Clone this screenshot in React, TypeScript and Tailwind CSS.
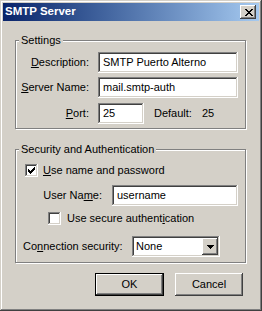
import type { ReactNode } from "react";

const raised =
  "shadow-[inset_-1px_-1px_#404040,inset_1px_1px_#ffffff,inset_-2px_-2px_#808080,inset_2px_2px_#d4d0c8]";
const sunken =
  "shadow-[inset_-1px_-1px_#ffffff,inset_1px_1px_#808080,inset_-2px_-2px_#d4d0c8,inset_2px_2px_#404040]";

// tiny pixel glyphs, drawn the way the classic theme does them
function Pix({ rows, className }: { rows: string[]; className?: string }) {
  const w = rows[0].length;
  const h = rows.length;
  return (
    <svg
      width={w}
      height={h}
      viewBox={`0 0 ${w} ${h}`}
      shapeRendering="crispEdges"
      className={className}
      aria-hidden="true"
    >
      {rows.flatMap((r, y) =>
        r.split("").map((c, x) =>
          c === "X" ? <rect key={`${x}-${y}`} x={x} y={y} width={1} height={1} fill="#000" /> : null
        )
      )}
    </svg>
  );
}

const closeGlyph = ["XX....XX", ".XX..XX.", "..XXXX..", "...XX...", "..XXXX..", ".XX..XX.", "XX....XX"];
const checkGlyph = ["......X", ".....XX", "X...XXX", "XX.XXX.", "XXXXX..", ".XXX...", "..X...."];
const arrowGlyph = ["XXXXXXX", ".XXXXX.", "..XXX..", "...X..."];

function Field({ value, className }: { value: string; className: string }) {
  return (
    <div className={`h-[21px] bg-white ${sunken} flex items-center pl-[5px] text-[11px] ${className}`}>
      {value}
    </div>
  );
}

function Check({ checked }: { checked?: boolean }) {
  return (
    <div className={`w-[13px] h-[13px] bg-white ${sunken} flex items-center justify-center shrink-0`}>
      {checked && <Pix rows={checkGlyph} />}
    </div>
  );
}

function Group({ title, children, className }: { title: string; children: ReactNode; className?: string }) {
  return (
    <fieldset
      className={`ml-[12px] w-[231px] border border-[#808080] shadow-[inset_1px_1px_#ffffff,1px_1px_#ffffff] ${className ?? ""}`}
    >
      <legend className="ml-[3px] px-[2px] bg-[#d4d0c8] leading-[14px]">{title}</legend>
      {children}
    </fieldset>
  );
}

function Btn({ label, isDefault, className }: { label: string; isDefault?: boolean; className: string }) {
  return (
    <button
      type="button"
      className={`h-[23px] bg-[#d4d0c8] ${
        isDefault
          ? "border border-black shadow-[inset_-1px_-1px_#404040,inset_1px_1px_#ffffff,inset_-2px_-2px_#808080]"
          : raised
      } text-[11px] ${className}`}
    >
      {label}
    </button>
  );
}

export default function App() {
  return (
    <div className="w-[262px] h-[311px] bg-[#d4d0c8] p-[3px] flex flex-col text-[11px] text-black font-['Liberation_Sans',Arial,sans-serif] shadow-[inset_-1px_-1px_#404040,inset_1px_1px_#d4d0c8,inset_-2px_-2px_#808080,inset_2px_2px_#ffffff]">
      <div className="h-[18px] flex items-center justify-between bg-gradient-to-r from-[#0a246a] to-[#a6caf0] pl-[2px] pr-[3px]">
        <span className="text-white font-bold text-[11.5px] leading-none">SMTP Server</span>
        <div className={`w-[16px] h-[14px] bg-[#d4d0c8] ${raised} flex items-center justify-center pl-px`}>
          <Pix rows={closeGlyph} />
        </div>
      </div>

      <Group title="Settings" className="mt-[12px] pb-[4px]">
        <div className="mt-[5px] flex items-center h-[21px]">
          <span className="w-[73px] text-right">
            <u>D</u>escription:
          </span>
          <Field value="SMTP Puerto Alterno" className="ml-[9px] w-[140px]" />
        </div>
        <div className="mt-[4px] flex items-center h-[21px]">
          <span className="w-[73px] text-right">
            <u>S</u>erver Name:
          </span>
          <Field value="mail.smtp-auth" className="ml-[9px] w-[140px]" />
        </div>
        <div className="mt-[5px] flex items-center h-[21px]">
          <span className="w-[73px] text-right">
            <u>P</u>ort:
          </span>
          <Field value="25" className="ml-[9px] w-[46px]" />
          <span className="ml-[10px]">Default:</span>
          <span className="ml-[10px]">25</span>
        </div>
      </Group>

      <Group title="Security and Authentication" className="mt-[13px] pb-[5px] pr-[7px]">
        <div className="mt-[8px] flex items-center h-[13px] pl-[9px]">
          <Check checked />
          <span className="ml-[5px]">
            <u>U</u>se name and password
          </span>
        </div>
        <div className="mt-[8px] flex items-center h-[21px]">
          <span className="flex-1 text-right">
            User Na<u>m</u>e:
          </span>
          <Field value="username" className="ml-[10px] w-[126px]" />
        </div>
        <div className="mt-[6px] flex items-center h-[13px] pl-[32px]">
          <Check />
          <span className="ml-[6px]">
            Use secure authent<u>i</u>cation
          </span>
        </div>
        <div className="mt-[11px] flex items-center h-[21px] pl-[7px]">
          <span className="w-[109px]">
            Co<u>n</u>nection security:
          </span>
          <div className={`w-[88px] h-[21px] bg-white ${sunken} flex items-center p-[2px]`}>
            <span className="flex-1 pl-[2px]">None</span>
            <div className={`w-[16px] h-full bg-[#d4d0c8] ${raised} flex items-center justify-center`}>
              <Pix rows={arrowGlyph} />
            </div>
          </div>
        </div>
      </Group>

      <div className="mt-[10px] ml-[92px] flex gap-[11px]">
        <Btn label="OK" isDefault className="w-[69px]" />
        <Btn label="Cancel" className="w-[68px]" />
      </div>
    </div>
  );
}
